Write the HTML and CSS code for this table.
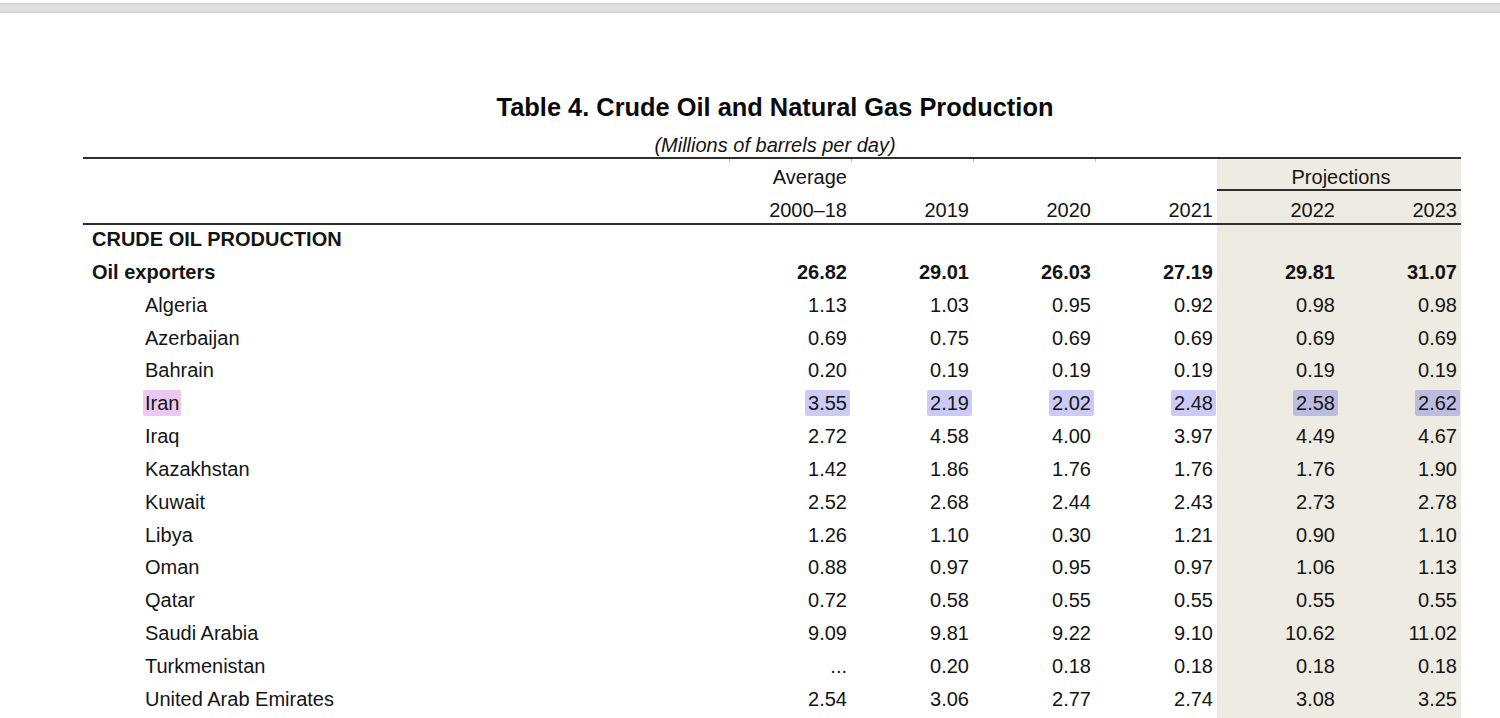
FILE: index.html
```html
<!DOCTYPE html>
<html lang="en">
<head>
<meta charset="utf-8">
<title>Table 4. Crude Oil and Natural Gas Production</title>
<link rel="stylesheet" href="styles.css">
</head>
<body>
<div class="topbar"></div>
<main class="page">
  <h1 class="title">Table 4. Crude Oil and Natural Gas Production</h1>
  <p class="subtitle">(Millions of barrels per day)</p>
  <div class="grid">
    <div class="h1c lab"></div>
    <div class="h1c num tick">Average</div>
    <div class="h1c tick"></div>
    <div class="h1c tick"></div>
    <div class="h1c tick"></div>
    <div class="h1c proj-head">Projections</div>

    <div class="h2c lab"></div>
    <div class="h2c num">2000–18</div>
    <div class="h2c num">2019</div>
    <div class="h2c num">2020</div>
    <div class="h2c num">2021</div>
    <div class="h2c num proj">2022</div>
    <div class="h2c num proj">2023</div>

    <div class="c lab bold">CRUDE OIL PRODUCTION</div>
    <div class="c"></div><div class="c"></div><div class="c"></div><div class="c"></div>
    <div class="c proj"></div><div class="c proj"></div>

    <div class="c lab bold">Oil exporters</div>
    <div class="c num bold">26.82</div><div class="c num bold">29.01</div><div class="c num bold">26.03</div><div class="c num bold">27.19</div>
    <div class="c num bold proj">29.81</div><div class="c num bold proj">31.07</div>

    <div class="c lab ind">Algeria</div>
    <div class="c num">1.13</div><div class="c num">1.03</div><div class="c num">0.95</div><div class="c num">0.92</div>
    <div class="c num proj">0.98</div><div class="c num proj">0.98</div>

    <div class="c lab ind">Azerbaijan</div>
    <div class="c num">0.69</div><div class="c num">0.75</div><div class="c num">0.69</div><div class="c num">0.69</div>
    <div class="c num proj">0.69</div><div class="c num proj">0.69</div>

    <div class="c lab ind">Bahrain</div>
    <div class="c num">0.20</div><div class="c num">0.19</div><div class="c num">0.19</div><div class="c num">0.19</div>
    <div class="c num proj">0.19</div><div class="c num proj">0.19</div>

    <div class="c lab ind"><span class="hl-pink">Iran</span></div>
    <div class="c num"><span class="hl">3.55</span></div><div class="c num"><span class="hl">2.19</span></div><div class="c num"><span class="hl">2.02</span></div><div class="c num"><span class="hl">2.48</span></div>
    <div class="c num proj"><span class="hl hl-dark">2.58</span></div><div class="c num proj"><span class="hl hl-dark">2.62</span></div>

    <div class="c lab ind">Iraq</div>
    <div class="c num">2.72</div><div class="c num">4.58</div><div class="c num">4.00</div><div class="c num">3.97</div>
    <div class="c num proj">4.49</div><div class="c num proj">4.67</div>

    <div class="c lab ind">Kazakhstan</div>
    <div class="c num">1.42</div><div class="c num">1.86</div><div class="c num">1.76</div><div class="c num">1.76</div>
    <div class="c num proj">1.76</div><div class="c num proj">1.90</div>

    <div class="c lab ind">Kuwait</div>
    <div class="c num">2.52</div><div class="c num">2.68</div><div class="c num">2.44</div><div class="c num">2.43</div>
    <div class="c num proj">2.73</div><div class="c num proj">2.78</div>

    <div class="c lab ind">Libya</div>
    <div class="c num">1.26</div><div class="c num">1.10</div><div class="c num">0.30</div><div class="c num">1.21</div>
    <div class="c num proj">0.90</div><div class="c num proj">1.10</div>

    <div class="c lab ind">Oman</div>
    <div class="c num">0.88</div><div class="c num">0.97</div><div class="c num">0.95</div><div class="c num">0.97</div>
    <div class="c num proj">1.06</div><div class="c num proj">1.13</div>

    <div class="c lab ind">Qatar</div>
    <div class="c num">0.72</div><div class="c num">0.58</div><div class="c num">0.55</div><div class="c num">0.55</div>
    <div class="c num proj">0.55</div><div class="c num proj">0.55</div>

    <div class="c lab ind">Saudi Arabia</div>
    <div class="c num">9.09</div><div class="c num">9.81</div><div class="c num">9.22</div><div class="c num">9.10</div>
    <div class="c num proj">10.62</div><div class="c num proj">11.02</div>

    <div class="c lab ind">Turkmenistan</div>
    <div class="c num">...</div><div class="c num">0.20</div><div class="c num">0.18</div><div class="c num">0.18</div>
    <div class="c num proj">0.18</div><div class="c num proj">0.18</div>

    <div class="c lab ind">United Arab Emirates</div>
    <div class="c num">2.54</div><div class="c num">3.06</div><div class="c num">2.77</div><div class="c num">2.74</div>
    <div class="c num proj">3.08</div><div class="c num proj">3.25</div>

    <div class="c"></div><div class="c"></div><div class="c"></div><div class="c"></div><div class="c"></div>
    <div class="c proj"></div><div class="c proj"></div>
  </div>
</main>
</body>
</html>
```

FILE: styles.css
```css
html, body {
  margin: 0;
  padding: 0;
  background: #ffffff;
}
body {
  font-family: "Liberation Sans", Arial, sans-serif;
  color: #141414;
  overflow: hidden;
  height: 718px;
}
.topbar {
  margin-top: 3px;
  height: 8px;
  background: #dedede;
  border-top: 1px solid #d2d2d2;
  border-bottom: 1px solid #d2d2d2;
}
.page {
  width: 1378px;
  margin-left: 83px;
}
.title {
  margin: 79px 0 0 0;
  padding-left: 6px;
  font-size: 25.4px;
  line-height: 30px;
  font-weight: 700;
  text-align: center;
  color: #0a0a0a;
}
.subtitle {
  margin: 12px 0 1px 0;
  padding-left: 6px;
  font-size: 20px;
  line-height: 22px;
  font-style: italic;
  text-align: center;
}
.grid {
  display: grid;
  grid-template-columns: 646px repeat(6, 122px);
  border-top: 2px solid #2e2e2e;
  font-size: 20px;
}
.h1c {
  height: 32px;
  line-height: 36px;
  position: relative;
}
.tick::before {
  content: "";
  position: absolute;
  left: 0;
  top: 0;
  width: 1px;
  height: 3px;
  background: #bdbdbd;
}
.proj-head {
  grid-column: span 2;
  text-align: center;
  background: #eeebe2;
  border-bottom: 2px solid #2e2e2e;
  height: 30px;
  padding-left: 4px;
}
.h2c {
  height: 32px;
  line-height: 38px;
  border-bottom: 2px solid #2e2e2e;
}
.c {
  height: 32.85px;
  line-height: 28px;
  white-space: nowrap;
}
.num {
  text-align: right;
  padding-right: 4px;
}
.lab {
  padding-left: 9px;
}
.ind {
  padding-left: 62px;
}
.bold {
  font-weight: 700;
}
.proj {
  background: #eeebe2;
}
.hl, .hl-pink {
  display: inline-block;
  line-height: 26px;
  padding: 0 3px;
  border-radius: 2px;
}
.hl {
  background: #cbcbf6;
  margin-right: -3px;
}
.hl-dark {
  background: #bcbbe0;
}
.hl-pink {
  background: #ebc9f0;
  margin-left: -2px;
  padding: 0 2px;
}
```
